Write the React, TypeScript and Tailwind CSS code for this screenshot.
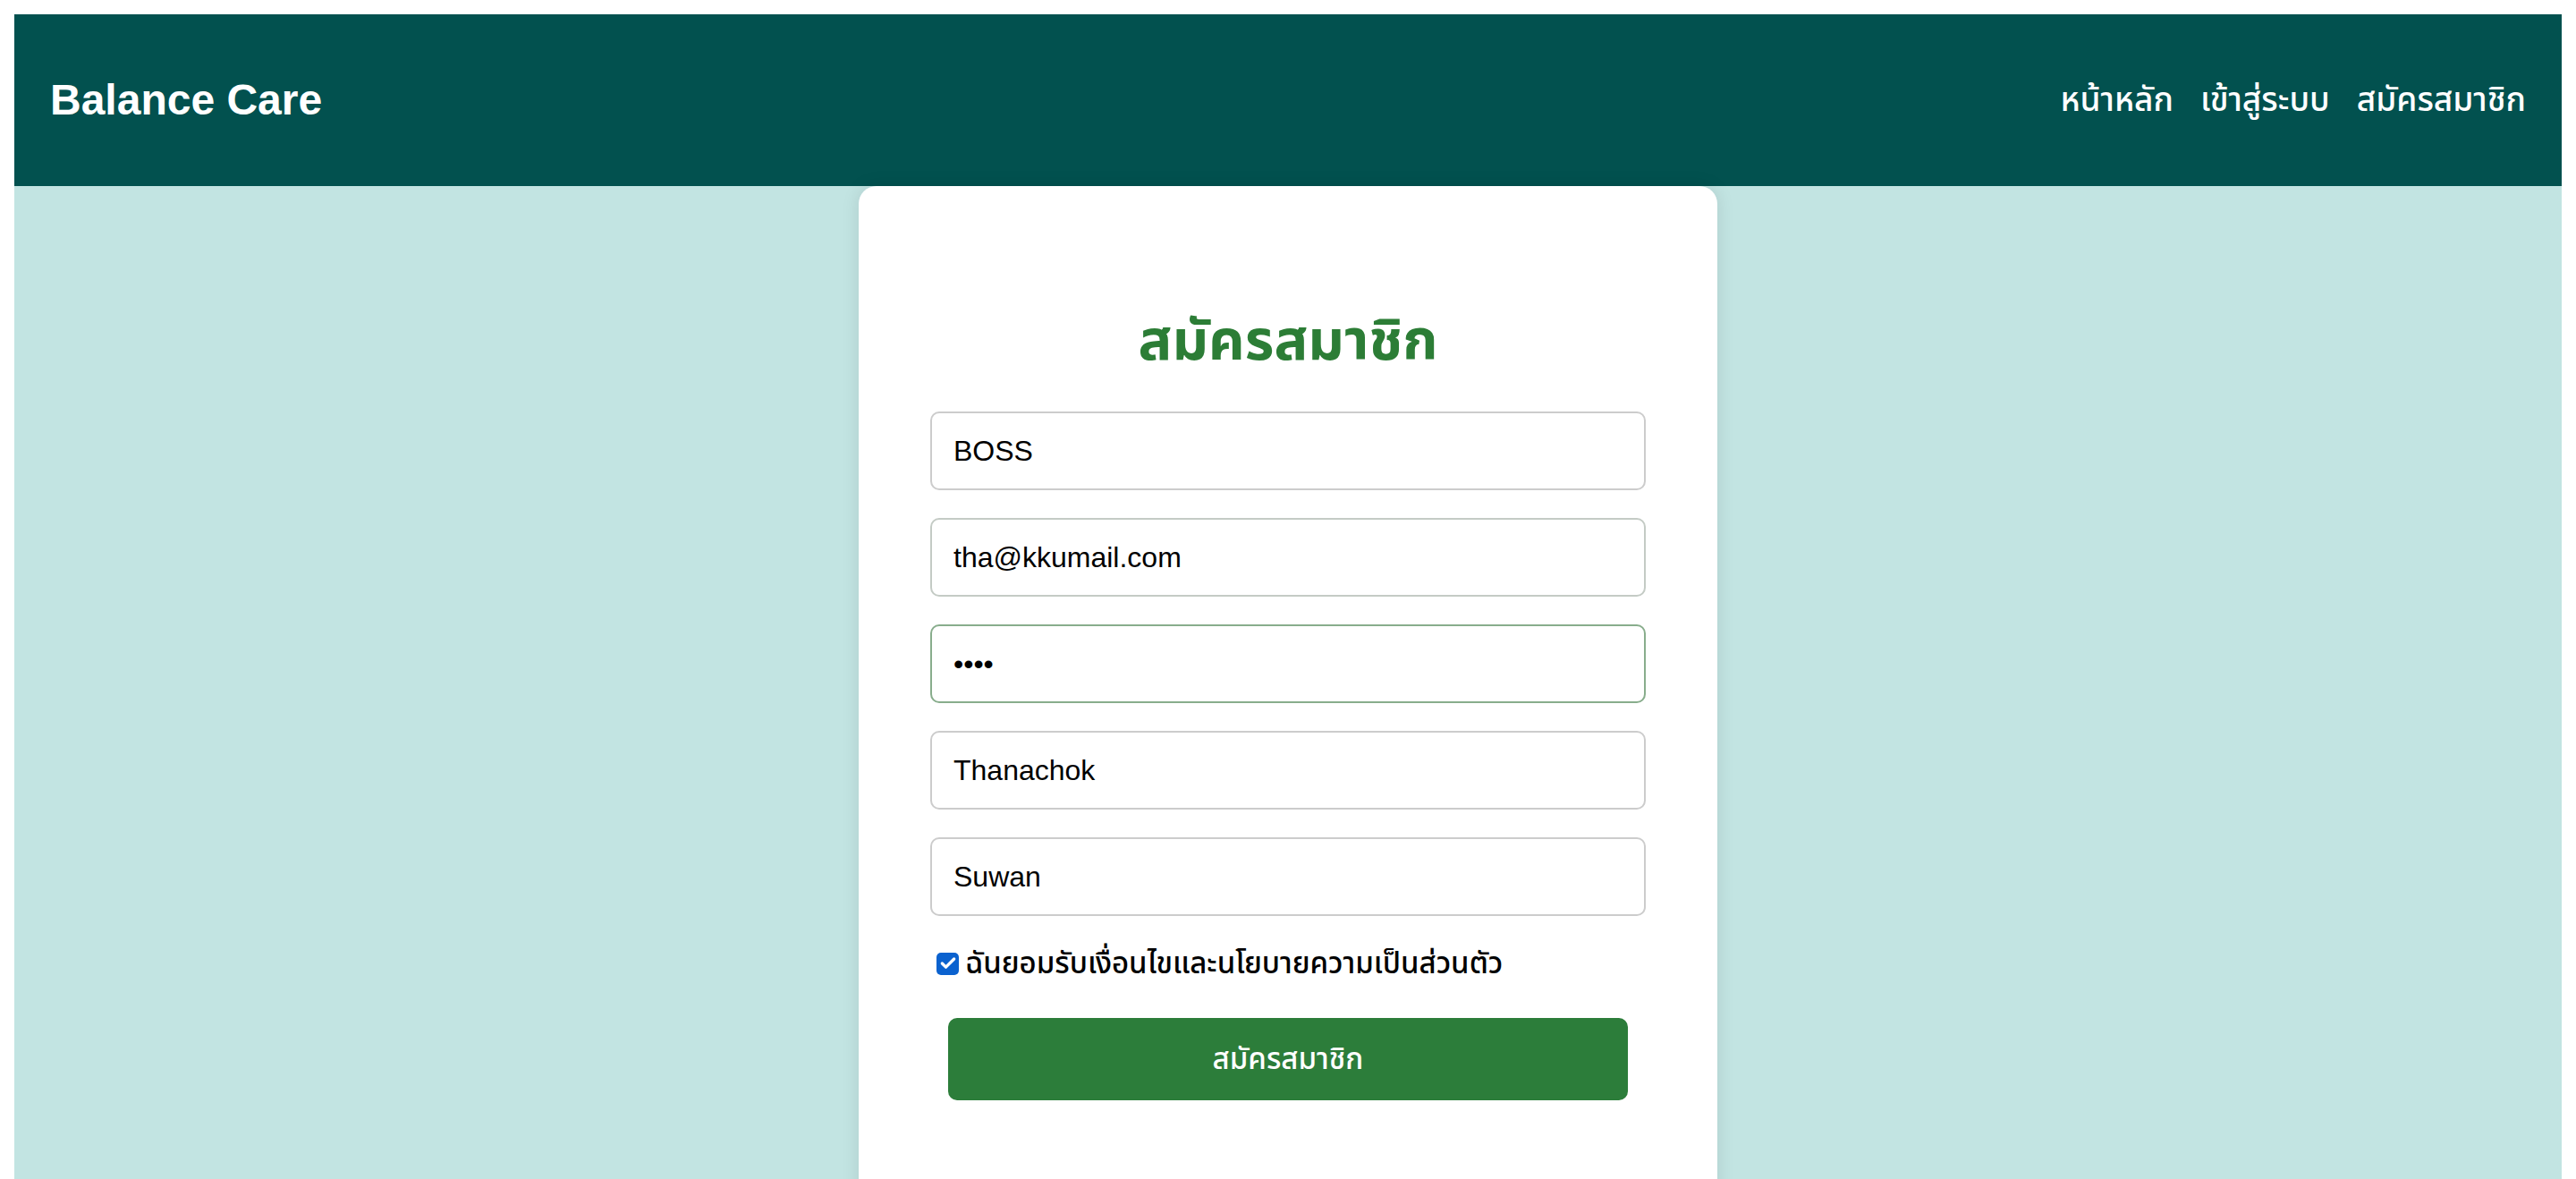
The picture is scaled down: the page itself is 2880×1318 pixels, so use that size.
import { Check } from 'lucide-react';

const fields = [
    { type: 'text', value: 'BOSS', border: 'border-[#cccccc]' },
    { type: 'email', value: 'tha@kkumail.com', border: 'border-[#c4cbc5]' },
    { type: 'password', value: 'abcd', border: 'border-[#88ad8c]' },
    { type: 'text', value: 'Thanachok', border: 'border-[#cccccc]' },
    { type: 'text', value: 'Suwan', border: 'border-[#cccccc]' },
];

export default function App() {
    return (
        <div className="min-h-screen bg-white p-4 font-['Liberation_Sans','Noto_Sans_Thai','Thonburi',sans-serif]">
            {/* Header */}
            <header className="h-[192px] bg-[#02514f] px-[40px] flex items-center justify-between">
                <h1 className="text-[48px] font-bold text-white">Balance Care</h1>
                <nav className="flex items-center gap-[30px] text-[37px] font-medium text-white">
                    <a href="#">หน้าหลัก</a>
                    <a href="#">เข้าสู่ระบบ</a>
                    <a href="#">สมัครสมาชิก</a>
                </nav>
            </header>

            {/* Main Content */}
            <main className="bg-[#c2e4e2] flex justify-center min-h-[1200px]">
                <div className="w-[960px] bg-white rounded-[20px] shadow-[0_0_20px_rgba(0,0,0,0.1)] px-[80px] pt-[132px] pb-[140px]">
                    <h2 className="h-[80px] flex items-center justify-center text-[63px] font-bold text-[#2c7d36]">
                        สมัครสมาชิก
                    </h2>

                    <form className="mt-[40px] flex flex-col gap-[31px]">
                        {fields.map((f, i) => (
                            <input
                                key={i}
                                type={f.type}
                                defaultValue={f.value}
                                className={`h-[88px] w-full rounded-[10px] border-2 ${f.border} bg-white px-[24px] text-[32px] text-black outline-none`}
                            />
                        ))}
                    </form>

                    <label className="mt-[32px] h-[42px] flex items-center pl-[7px] gap-[7px] text-[33px] font-medium text-black">
                        <span className="w-[25px] h-[25px] shrink-0 rounded-[5px] bg-[#0b62cf] flex items-center justify-center">
                            <Check className="w-[20px] h-[20px] text-white" strokeWidth={4} />
                        </span>
                        ฉันยอมรับเงื่อนไขและนโยบายความเป็นส่วนตัว
                    </label>

                    <button
                        type="button"
                        className="mt-[40px] mx-auto block w-[95%] h-[92px] rounded-[10px] bg-[#2c7d3a] text-[33px] font-medium text-white"
                    >
                        สมัครสมาชิก
                    </button>
                </div>
            </main>
        </div>
    );
}
